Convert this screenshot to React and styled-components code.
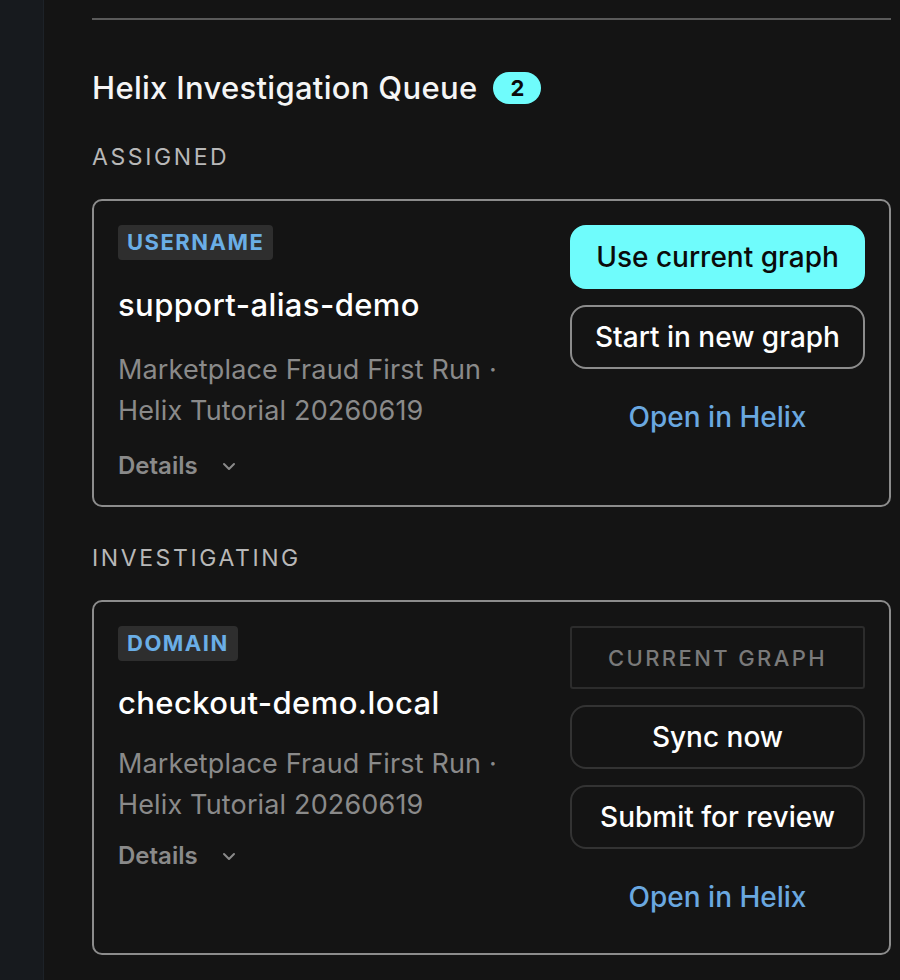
import React from 'react';
import styled, { createGlobalStyle } from 'styled-components';

const GlobalStyle = createGlobalStyle`
  html, body {
    margin: 0;
    padding: 0;
    background-color: #141414;
  }
  body {
    font-family: Inter, 'Noto Sans', 'Liberation Sans', sans-serif;
    -webkit-font-smoothing: antialiased;
  }
`;

const queue = [
  {
    status: 'Assigned',
    kind: 'Username',
    value: 'support-alias-demo',
    actions: [
      { label: 'Use current graph', variant: 'primary' },
      { label: 'Start in new graph', variant: 'outline' },
    ],
  },
  {
    status: 'Investigating',
    kind: 'Domain',
    value: 'checkout-demo.local',
    current: true,
    actions: [
      { label: 'Sync now', variant: 'subtle' },
      { label: 'Submit for review', variant: 'subtle' },
    ],
  },
];

const ChevronDown = () => (
  <svg width="14" height="9" viewBox="0 0 14 9" fill="none">
    <polyline
      points="2,2 7,7 12,2"
      stroke="#8a8a8a"
      strokeWidth="2"
      strokeLinecap="round"
      strokeLinejoin="round"
    />
  </svg>
);

const QueueCard = ({ item }) => {
  const { kind, value, current, actions } = item;

  return (
    <Card>
      <InfoColumn>
        <KindTag>{kind}</KindTag>
        <Value $tight={current}>{value}</Value>
        <Meta $tight={current}>
          Marketplace Fraud First Run ·
          <br />
          Helix Tutorial 20260619
        </Meta>
        <DetailsToggle $tight={current}>
          Details
          <ChevronDown />
        </DetailsToggle>
      </InfoColumn>
      <ActionColumn>
        {current && <CurrentGraph>Current graph</CurrentGraph>}
        {actions.map((action) => (
          <ActionButton key={action.label} variant={action.variant}>
            {action.label}
          </ActionButton>
        ))}
        <HelixLink href="#">Open in Helix</HelixLink>
      </ActionColumn>
    </Card>
  );
};

const App = () => {
  return (
    <>
      <GlobalStyle />
      <Layout>
        <Sidebar />
        <Main>
          <Divider />
          <Heading>
            Helix Investigation Queue
            <CountBadge>{queue.length}</CountBadge>
          </Heading>
          {queue.map((item) => (
            <Section key={item.value}>
              <StatusLabel>{item.status}</StatusLabel>
              <QueueCard item={item} />
            </Section>
          ))}
        </Main>
      </Layout>
    </>
  );
};

const Layout = styled.div`
  display: flex;
  min-height: 980px;
  background-color: #141414;
`;

const Sidebar = styled.aside`
  flex: 0 0 43px;
  background-color: #171a1e;
  border-right: 1px solid #1d2228;
`;

const Main = styled.main`
  flex: 1;
  padding: 18px 9px 40px 48px;
  display: flex;
  flex-direction: column;
  gap: 38px;
`;

const Divider = styled.hr`
  margin: 0 0 12px;
  border: none;
  height: 2px;
  background-color: #5a5a5a;
`;

const Heading = styled.h2`
  margin: 0;
  display: flex;
  align-items: center;
  gap: 16px;
  font-size: 31px;
  line-height: 36px;
  font-weight: 500;
  letter-spacing: 0.3px;
  color: #f5f5f5;
`;

const CountBadge = styled.span`
  display: inline-flex;
  align-items: center;
  justify-content: center;
  width: 48px;
  height: 32px;
  border-radius: 16px;
  background-color: #6ffcfc;
  color: #0a0a0a;
  font-size: 22px;
  font-weight: 700;
  letter-spacing: 0;
`;

const Section = styled.section`
  display: flex;
  flex-direction: column;
  gap: 29px;
`;

const StatusLabel = styled.div`
  font-size: 23px;
  line-height: 26px;
  letter-spacing: 2.6px;
  text-transform: uppercase;
  color: #b8b8b8;
`;

const Card = styled.div`
  display: flex;
  justify-content: space-between;
  gap: 24px;
  padding: 24px;
  border: 2px solid #8c8c8c;
  border-radius: 10px;
`;

const InfoColumn = styled.div`
  display: flex;
  flex-direction: column;
  align-items: flex-start;
`;

const KindTag = styled.span`
  padding: 4px 9px;
  border-radius: 4px;
  background-color: #2e2e2e;
  color: #6aaee6;
  font-size: 22px;
  line-height: 27px;
  font-weight: 700;
  letter-spacing: 1.5px;
  text-transform: uppercase;
`;

const Value = styled.div`
  margin-top: ${({ $tight }) => ($tight ? '24px' : '27px')};
  font-size: 31px;
  line-height: 36px;
  font-weight: 500;
  letter-spacing: 0.4px;
  color: #ffffff;
`;

const Meta = styled.div`
  margin-top: ${({ $tight }) => ($tight ? '22px' : '26px')};
  font-size: 27px;
  line-height: 41px;
  letter-spacing: 0.15px;
  color: #8a8a8a;
`;

const DetailsToggle = styled.button`
  margin-top: ${({ $tight }) => ($tight ? '16px' : '20px')};
  padding: 0;
  display: inline-flex;
  align-items: center;
  gap: 24px;
  background: none;
  border: none;
  font-family: inherit;
  font-size: 24px;
  line-height: 30px;
  font-weight: 600;
  color: #8a8a8a;
  cursor: pointer;
`;

const ActionColumn = styled.div`
  flex: 0 0 295px;
  display: flex;
  flex-direction: column;
  gap: 16px;
`;

const buttonColors = {
  primary: 'background-color: #6ffcfc; color: #0a0a0a; border-color: #6ffcfc;',
  outline: 'background-color: transparent; color: #ffffff; border-color: #8c8c8c;',
  subtle: 'background-color: transparent; color: #ffffff; border-color: #333333;',
};

const ActionButton = styled.button`
  height: 64px;
  border: 2px solid;
  border-radius: 16px;
  font-family: inherit;
  font-size: 28px;
  font-weight: 500;
  cursor: pointer;
  ${({ variant }) => buttonColors[variant]}
`;

const CurrentGraph = styled.div`
  height: 63px;
  box-sizing: border-box;
  display: flex;
  align-items: center;
  justify-content: center;
  border: 2px solid #2c2c2c;
  border-radius: 3px;
  font-size: 22px;
  font-weight: 500;
  letter-spacing: 2.4px;
  text-transform: uppercase;
  color: #7a7a7a;
`;

const HelixLink = styled.a`
  height: 64px;
  display: flex;
  align-items: center;
  justify-content: center;
  font-size: 28px;
  font-weight: 500;
  color: #6aa8e0;
  text-decoration: none;
`;

export default App;
